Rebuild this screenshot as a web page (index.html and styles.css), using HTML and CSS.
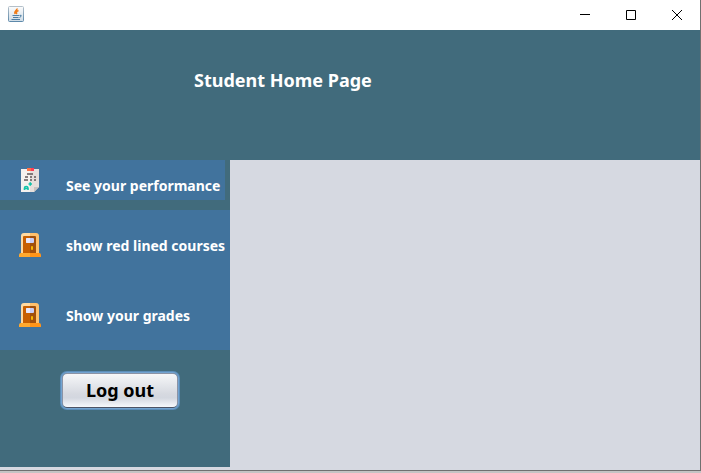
FILE: index.html
```html
<!DOCTYPE html>
<html lang="en">
<head>
<meta charset="utf-8">
<title>Student Home Page</title>
<link rel="stylesheet" href="styles.css">
</head>
<body>
<svg class="defs" aria-hidden="true">
  <symbol id="door" viewBox="0 0 22 24">
    <path d="M2 21V3Q2 0 5 0H11V21Z" fill="#ffd9a0"/>
    <path d="M11 0H17Q20 0 20 3V21H11Z" fill="#ffc06c"/>
    <path d="M4 20V4Q4 3 5 3H11V20Z" fill="#c75f00"/>
    <path d="M11 3H16Q17 3 17 4V20H11Z" fill="#a04f0c"/>
    <rect x="7" y="5" width="8" height="5" rx="1" fill="#c8cdf5"/>
    <path d="M8 5H11V10H8Q7 10 7 9V6Q7 5 8 5Z" fill="#e9e8fc"/>
    <path d="M13 13V17M12 15H14" stroke="#ffc000" stroke-width="1.4"/>
    <path d="M0 24V22Q0 20 2 20H11V24Z" fill="#ffaa30"/>
    <path d="M11 20H20Q22 20 22 22V24H11Z" fill="#ff9418"/>
  </symbol>
</svg>
<div class="window">
  <header class="titlebar">
    <svg class="app-icon" viewBox="0 0 16 16" role="img" aria-label="Java">
      <defs>
        <linearGradient id="tile" x1="0" y1="0" x2="0" y2="1"><stop offset="0" stop-color="#fcfcfc"/><stop offset="1" stop-color="#cfdce6"/></linearGradient>
        <linearGradient id="rim" x1="0" y1="0" x2="0" y2="1"><stop offset="0" stop-color="#b4c0ca"/><stop offset="1" stop-color="#5d89aa"/></linearGradient>
      </defs>
      <rect x=".5" y=".5" width="15" height="15" rx="1" fill="url(#tile)" stroke="url(#rim)"/>
      <path d="M9 2.5C9.5 4.5 5.5 5 7 8M10.5 4.5C8 5.5 8 6.5 8.8 8" fill="none" stroke="#f07c18" stroke-width="1.6"/>
      <path d="M4.5 9.5H11M5 11.5H10.5M3.5 13.5H12M11.5 9.5Q14 8.5 13 10.5L11.5 11.5" fill="none" stroke="#4f7fa5"/>
    </svg>
    <div class="controls">
      <button class="control" type="button" aria-label="Minimize"><svg viewBox="0 0 10 10"><path d="M0 4.5H10"/></svg></button>
      <button class="control" type="button" aria-label="Maximize"><svg viewBox="0 0 10 10"><path d="M.5 .5H9.5V9.5H.5Z"/></svg></button>
      <button class="control" type="button" aria-label="Close"><svg viewBox="0 0 10 10"><path d="M0 0L10 10M10 0L0 10"/></svg></button>
    </div>
  </header>
  <div class="banner"><h1>Student Home Page</h1></div>
  <div class="body">
    <aside class="sidebar">
      <nav class="menu">
        <a class="item item-short" href="#performance">
          <svg class="icon" viewBox="0 0 22 24" aria-hidden="true">
            <path d="M2 1H11V24H2Z" fill="#f5f1ee"/>
            <path d="M11 1H20V19L15 24H11Z" fill="#e6dfdb"/>
            <path d="M20 19L15 24V19Z" fill="#c9c3c0"/>
            <rect x="8" y="0" width="4" height="3" fill="#ff7043"/>
            <rect x="12" y="0" width="3" height="3" fill="#ff3c55"/>
            <path d="M8 6H14M6 9H9M11 9H13M15 9H17M5 12H9M11 12H13M15 12H17" stroke="#625859" stroke-width="1.5"/>
            <path d="M5.5 22V20Q5.5 18.5 7.2 18.5T9 20V22M6 20.5H9M9.5 16H13M11.2 14.2V17.8" fill="none" stroke="#12c4aa" stroke-width="1.6"/>
          </svg>
          <span>See your performance</span>
        </a>
        <a class="item" href="#courses"><svg class="icon" aria-hidden="true"><use href="#door"/></svg><span>show red lined courses</span></a>
        <a class="item" href="#grades"><svg class="icon" aria-hidden="true"><use href="#door"/></svg><span>Show your grades</span></a>
      </nav>
      <button class="logout" type="button">Log out</button>
    </aside>
    <main class="content"></main>
  </div>
</div>
</body>
</html>
```

FILE: styles.css
```css
* { box-sizing: border-box; }
body {
  margin: 0;
  background: #c4c4c4;
  font-family: Tahoma, "Noto Sans", "Open Sans", sans-serif;
  font-weight: 700;
}
.defs { position: absolute; width: 0; height: 0; }
.window {
  display: flex;
  flex-direction: column;
  min-height: calc(100vh - 2px);
  border-right: 1px solid #707070;
  border-bottom: 1px solid #707070;
  background: #d6d9e1;
}
.titlebar {
  display: flex;
  align-items: center;
  justify-content: space-between;
  height: 30px;
  padding-left: 8px;
  background: #fff;
}
.app-icon { width: 16px; height: 16px; margin-bottom: 2px; }
.controls { display: flex; height: 28px; }
.control {
  display: grid;
  place-items: center;
  width: 46px;
  padding: 0;
  border: 0;
  background: transparent;
}
.control svg { width: 10px; height: 10px; fill: none; stroke: #000; overflow: visible; }
.banner {
  height: 130px;
  padding: 38px 0 0 194px;
  background: #416b7c;
}
h1 { margin: 0; font-size: 18px; line-height: 24px; color: #fff; }
.body { display: flex; flex: 1; padding-bottom: 3px; }
.sidebar { width: 230px; background: #416b7c; }
.menu { display: flex; flex-direction: column; }
.item {
  display: flex;
  align-items: center;
  gap: 25px;
  height: 70px;
  padding-left: 19px;
  background: #41739d;
  color: #fff;
  font-size: 14px;
  line-height: 20px;
  text-decoration: none;
  white-space: nowrap;
}
.item span { padding-top: 2px; }
.item-short {
  align-items: flex-end;
  width: 225px;
  height: 40px;
  margin-bottom: 10px;
  padding-bottom: 4px;
}
.icon { flex: none; width: 22px; height: 24px; }
.item-short .icon { margin-bottom: 4px; }
.logout {
  display: block;
  width: 116px;
  height: 35px;
  margin: 23px 0 0 62px;
  padding: 0 0 2px;
  border: 1px solid #8b93a5;
  border-bottom-color: #4c5365;
  border-radius: 5px;
  outline: 1px solid #73a4d1;
  background: linear-gradient(#f6f7f9, #d6d9e0 60%, #d3d7df 72%, #f6f8fc);
  box-shadow: 0 0 0 2px #5c8db8;
  color: #000;
  font: inherit;
  font-size: 18px;
}
.content { flex: 1; }
```
